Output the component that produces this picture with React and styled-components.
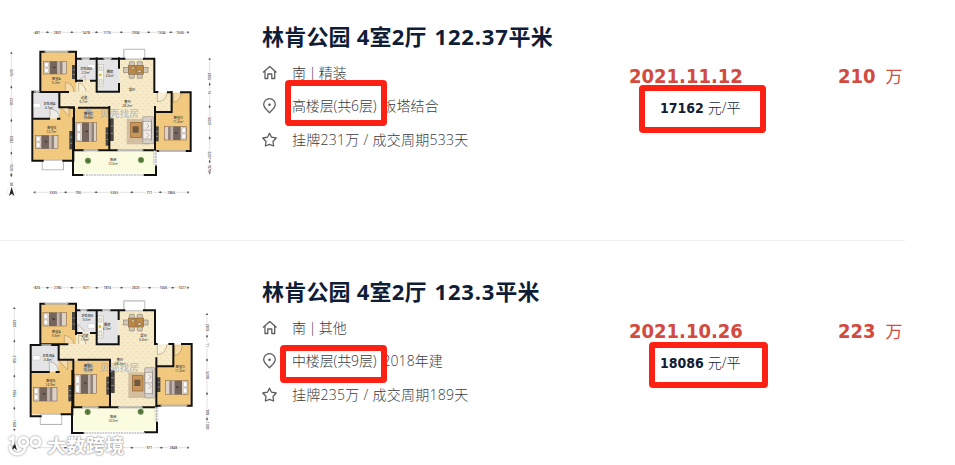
import React from "react";
import styled, { createGlobalStyle } from "styled-components";

// ----- Data -----
const plans = {
  first: {
    rooms: [
      { x: 120, y: 110, w: 108, h: 122, fill: "wood" },
      { x: 228, y: 130, w: 62, h: 65, fill: "#e4e4e6" },
      { x: 290, y: 130, w: 67, h: 101, fill: "#e4e4e6" },
      { x: 357, y: 130, w: 106, h: 150, fill: "tile" },
      { x: 228, y: 195, w: 62, h: 40, fill: "tile" },
      { x: 178, y: 232, w: 336, h: 46, fill: "tile" },
      { x: 463, y: 270, w: 52, h: 20, fill: "tile" },
      { x: 97, y: 230, w: 81, h: 80, fill: "#e4e4e6" },
      { x: 100, y: 310, w: 119, h: 126, fill: "wood" },
      { x: 178, y: 278, w: 42, h: 34, fill: "wood" },
      { x: 222, y: 278, w: 106, h: 128, fill: "wood" },
      { x: 328, y: 278, w: 136, h: 128, fill: "tile" },
      { x: 465, y: 290, w: 104, h: 118, fill: "wood" },
      { x: 515, y: 233, w: 55, h: 60, fill: "wood" },
      { x: 220, y: 406, w: 246, h: 68, fill: "#fbfbe0" },
    ],
    walls:
      "M134 110H121V231H204M205 110H228V199M228 131H244M270 131H310M335 131H373M432 131H463V231H472M504 232H515M543 232H572V408H558M476 408H465V276M515 231V291H466M97 437V230H105M119 230H121M178 233V277H222M208 278H222M97 311H147M174 311H178M97 437H128M190 437H220V310M222 278V406H250M295 406H328V276M237 278H328M328 406H352M430 406H464M290 130V230H357V207M290 197H273M228 197H246M357 130V158M290 230H314M219 406V480H248M468 452V480H432",
    bays: [
      { x: 373, y: 104, w: 60, h: 27 },
      { x: 128, y: 437, w: 61, h: 26 },
    ],
    windows: "M134 110H205M244 130H270M310 130H335M102 230H119M250 406H295M352 406H430M476 408H558",
    rails: "M250 480H432M468 407V452M463 407V450",
    doors: "M196 231V202Q220 205 222 231M233 198L255 182V198M150 310V281Q177 285 180 310M182 277L207 304V280M472 231V260Q498 260 502 230M520 235V262Q541 258 543 235M236 229V204Q254 208 258 229",
    beds: [
      [131, 139, 69, 38],
      [106, 361, 68, 40],
      [228, 323, 62, 57],
      [493, 335, 67, 40, true],
    ],
    cabinets: [[216, 150, 11, 42], [208, 348, 12, 55], [317, 337, 10, 55], [330, 310, 11, 68], [466, 334, 10, 45]],
    dining: [408, 164],
    sofa: [428, 305, 34, 81],
    rug: [380, 312, 67, 76],
    plants: [[264, 437], [423, 435]],
    counter: [294, 148, 17, 67],
    baths: [[263, 148, 22, 13], [97, 265, 24, 13]],
    labels: [
      [169, 195, "卧室A", "9.2m²"], [258, 164, "卫生间B", "2.9m²"], [330, 175, "厨房", "4.6m²"],
      [396, 229, "餐厅", ""], [252, 251, "过道", "6.7m²"], [148, 270, "卫生间A", "4.5m²"],
      [383, 263, "客厅", "28.2m²"], [155, 341, "卧室B", "12.7m²"], [266, 300, "卧室C", "10.6m²"],
      [535, 311, "卧室D", "11.4m²"], [340, 439, "阳台", "12.6m²"],
    ],
    mark: [280, 306],
    topY: 52,
    top: [[112, "481"], [173, "2831"], [258, "1478"], [321, "1776"], [407, "2904"], [485, "1504"], [540, "1506"]],
    bottomY: 532,
    bottom: [[160, "3335"], [234, "790"], [343, "5355"], [448, "711"], [514, "2866"]],
    leftX: 34,
    left: [[173, "3476"], [260, "2246"], [373, "3582"], [456, "1020"], [507, "38"]],
    rightX: 629,
    right: [[184, "2826"], [232, "16"], [318, "5020"], [420, "2207"], [459, "1878"]],
    compass: [35, 530],
  },
  second: {
    rooms: [
      { x: 120, y: 86, w: 108, h: 122, fill: "wood" },
      { x: 228, y: 106, w: 62, h: 67, fill: "#e4e4e6" },
      { x: 290, y: 106, w: 66, h: 102, fill: "#e4e4e6" },
      { x: 356, y: 106, w: 108, h: 150, fill: "tile" },
      { x: 228, y: 173, w: 62, h: 40, fill: "tile" },
      { x: 175, y: 208, w: 344, h: 48, fill: "tile" },
      { x: 467, y: 250, w: 53, h: 24, fill: "tile" },
      { x: 92, y: 210, w: 83, h: 82, fill: "#e4e4e6" },
      { x: 94, y: 290, w: 123, h: 128, fill: "wood" },
      { x: 175, y: 256, w: 43, h: 38, fill: "wood" },
      { x: 220, y: 256, w: 110, h: 140, fill: "wood" },
      { x: 330, y: 256, w: 138, h: 140, fill: "tile" },
      { x: 469, y: 274, w: 105, h: 118, fill: "wood" },
      { x: 520, y: 209, w: 54, h: 67, fill: "wood" },
      { x: 217, y: 397, w: 254, h: 70, fill: "#fbfbe0" },
    ],
    walls:
      "M134 86H121V208H202M205 86H228V177M228 106H240M262 106H306M332 106H373M432 106H465V207H470M508 207H520M546 207H575V392H562M482 392H469V250M520 207V274H469M92 424V210H124M154 210H176V254H220M92 291H146M170 291H176M92 424H122M185 418H217V288M220 254V397H246M296 397H330V254M236 254H330M330 397H354M428 397H470M290 106V208H356V184M290 174H273M228 174H244M356 106V132M290 208H314M216 397V474H251M471 440V472H435",
    bays: [
      { x: 373, y: 79, w: 60, h: 27 },
      { x: 122, y: 419, w: 62, h: 28 },
    ],
    windows: "M134 86H205M240 105H262M306 105H332M124 210H154M246 397H296M354 397H428M482 392H562",
    rails: "M251 474H435M472 397V440M467 397V440",
    doors: "M193 208V181Q218 185 222 208M233 175V148L256 170M148 290V260Q173 263 175 288M178 258L203 285V258M472 207V239Q498 237 501 208M524 212V242Q546 236 546 212M236 208V180Q253 183 258 208",
    beds: [
      [129, 113, 70, 40],
      [100, 337, 71, 41],
      [224, 299, 65, 57],
      [496, 317, 68, 41, true],
    ],
    cabinets: [[216, 111, 11, 54], [205, 330, 12, 49], [319, 305, 10, 54], [332, 286, 12, 68], [470, 307, 11, 44]],
    dining: [408, 142],
    sofa: [434, 278, 31, 91],
    rug: [385, 292, 63, 77],
    plants: [[263, 411], [422, 410]],
    counter: [293, 123, 17, 66],
    baths: [[264, 146, 21, 14], [98, 242, 22, 13]],
    labels: [
      [169, 173, "卧室A", "9.6m²"], [261, 127, "卫生间B", "3.0m²"], [322, 154, "厨房", "4.5m²"],
      [431, 185, "餐厅", "6.6m²"], [255, 186, "过道", "1.5m²"], [145, 247, "卫生间A", "4.8m²"],
      [360, 259, "客厅", "28.2m²"], [152, 322, "卧室B", "14.3m²"], [265, 277, "卧室C", "10.6m²"],
      [541, 280, "卧室D", "11.4m²"], [340, 430, "阳台", "14.0m²"],
    ],
    mark: [280, 288],
    topY: 38,
    top: [[112, "826"], [173, "2780"], [258, "1671"], [322, "1816"], [407, "2823"], [490, "1606"], [546, "1327"]],
    bottomY: 518,
    bottom: [[158, ""], [234, ""], [343, ""], [448, "971"], [520, "2848"]],
    leftX: 43,
    left: [[145, "3200"], [252, "2168"], [355, "3556"], [445, "1368"]],
    rightX: 621,
    right: [[158, "2874"], [210, "11"], [300, "5208"], [412, "908"], [452, "1000"]],
    compass: [43, 513],
  },
};

const deals = [
  {
    name: "林肯公园 4室2厅",
    area: "122.37",
    house: "南 | 精装",
    floor: "高楼层(共6层)",
    building: "板塔结合",
    cycle: "挂牌231万 / 成交周期533天",
    date: "2021.11.12",
    unitPrice: "17162",
    total: "210",
    plan: plans.first,
    planTop: 15,
    floorBox: { left: 285, top: 80, width: 102, height: 46 },
    priceBox: { left: 639, top: 85, width: 127, height: 48 },
  },
  {
    name: "林肯公园 4室2厅",
    area: "123.3",
    house: "南 | 其他",
    floor: "中楼层(共9层)",
    building: "2018年建",
    cycle: "挂牌235万 / 成交周期189天",
    date: "2021.10.26",
    unitPrice: "18086",
    total: "223",
    plan: plans.second,
    planTop: 20,
    floorBox: { left: 280, top: 90, width: 107, height: 38 },
    priceBox: { left: 649, top: 87, width: 119, height: 46 },
  },
];

// ----- Styled Components -----
const GlobalStyle = createGlobalStyle`
  body {
    margin: 0;
    background: #fff;
  }
`;

const Page = styled.main`
  position: relative;
  width: 955px;
  height: 465px;
  overflow: hidden;
  background: #fff;
  font-family: "Open Sans", "Noto Sans CJK SC", sans-serif;
`;

const Deal = styled.article`
  position: relative;
  display: flex;
  width: 905px;
  height: 240px;
  margin-bottom: 14px;
  border-bottom: 1px solid #f0f0f0;
`;

const PlanSvg = styled.svg`
  flex: none;
  width: 225px;
  height: 190px;
  margin-top: ${(p) => p.$top}px;
`;

const Info = styled.div`
  flex: none;
  box-sizing: border-box;
  width: 404px;
  padding: 20px 0 0 37px;
`;

const Title = styled.h2`
  margin: 0 0 11px;
  font-size: 22px;
  line-height: 32px;
  font-weight: 700;
  color: #101d37;
  white-space: nowrap;
  letter-spacing: 0.2px;
`;

const Area = styled.span`
  margin-left: 2px;
  letter-spacing: 0.8px;
`;

const Detail = styled.div`
  display: flex;
  align-items: center;
  height: 20px;
  margin-bottom: ${(p) => p.$gap || 13}px;
  font-size: 14px;
  line-height: 20px;
  font-weight: 300;
  letter-spacing: ${(p) => p.$spacing || 0}px;
  word-spacing: ${(p) => p.$wordSpacing || 0}px;
  color: #383b40;
  white-space: nowrap;
`;

const Icon = styled.svg`
  width: 16px;
  height: 16px;
  margin-right: 14px;
  fill: none;
  stroke: #5b5e61;
  stroke-width: 1.3;
  stroke-linejoin: round;
`;

const Building = styled.span`
  margin-left: 6px;
  letter-spacing: 0.1px;
`;

const Sold = styled.div`
  flex: none;
  width: 209px;
  padding-top: 63px;
`;

const SoldDate = styled.div`
  font-family: "DejaVu Sans Condensed", "DejaVu Sans", sans-serif;
  font-stretch: condensed;
  font-size: 20px;
  line-height: 26px;
  font-weight: 700;
  color: #d24a40;
`;

const UnitPrice = styled.div`
  display: flex;
  gap: 4px;
  padding: 8px 0 0 31px;
  font-size: 14px;
  line-height: 22px;
  font-weight: 300;
  color: #101d37;
`;

const UnitValue = styled.b`
  font-family: "DejaVu Sans Condensed", "DejaVu Sans", sans-serif;
  font-stretch: condensed;
  font-weight: 700;
`;

const Total = styled.div`
  display: flex;
  align-items: baseline;
  gap: 10px;
  height: 26px;
  padding-top: 63px;
  color: #d24a40;
  line-height: 26px;
`;

const TotalUnit = styled.span`
  font-size: 17px;
`;

const Highlight = styled.div`
  position: absolute;
  box-sizing: border-box;
  left: ${(p) => p.$box.left}px;
  top: ${(p) => p.$box.top}px;
  width: ${(p) => p.$box.width}px;
  height: ${(p) => p.$box.height}px;
  border: 6px solid #fd2114;
  border-radius: 4px;
`;

const Watermark = styled.div`
  position: absolute;
  left: 7px;
  top: 433px;
  display: flex;
  align-items: center;
  gap: 4px;
  color: #fff;
  font-size: 19px;
  line-height: 26px;
  font-weight: 700;
  letter-spacing: 0.4px;
  text-shadow: 0 0 2px #999, 0 0 2px #aaa, 0 0 1px #aaa;
`;

const WatermarkLogo = styled.svg`
  width: 36px;
  height: 26px;
  fill: none;
  stroke-linecap: round;
  filter: drop-shadow(0 0 1px #888);
`;

// ----- Floor plan -----
function Bed({ box }) {
  const [x, y, w, h, flip] = box;
  return (
    <g transform={flip ? `translate(${2 * x + w} 0) scale(-1 1)` : undefined}>
      <rect x={x} y={y} width={w} height={h} fill="#ddd2c6" stroke="#75553f" strokeWidth="1.5" />
      <rect x={x + 3} y={y + 4} width="11" height={h / 2 - 6} rx="3" fill="#fff" stroke="#918378" />
      <rect x={x + 3} y={y + h / 2 + 2} width="11" height={h / 2 - 6} rx="3" fill="#fff" stroke="#918378" />
      <rect x={x + 18} y={y} width={w * 0.34} height={h} fill="#75655d" />
      <rect x={x + 18 + w * 0.34} y={y} width="7" height={h} fill="#c1b5ad" />
      <rect x={x + 25 + w * 0.34} y={y} width="8" height={h} fill="#92847c" />
      <path d={`M${x + 28} ${y + h * 0.4}h8v6h-8z`} fill="#4f4641" />
    </g>
  );
}

function Dining({ at: [x, y] }) {
  return (
    <g stroke="#736451" strokeWidth="1.5">
      {[-12, 12].map((dx) => (
        <g key={dx} fill="#d0c8bb">
          <rect x={x + dx - 8} y={y - 24} width="15" height="15" rx="2" />
          <rect x={x + dx - 8} y={y + 11} width="15" height="15" rx="2" />
        </g>
      ))}
      <rect x={x - 37} y={y - 7} width="15" height="15" fill="#d0c8bb" />
      <rect x={x + 21} y={y - 7} width="15" height="15" fill="#d0c8bb" />
      <rect x={x - 23} y={y - 13} width="46" height="27" fill="#bd8744" />
      <path d={`M${x} ${y - 13}v27M${x - 14} ${y - 7}h9v5h-9zM${x + 6} ${y + 2}h9v6h-9z`} fill="#f4e2c0" />
    </g>
  );
}

function Sofa({ box: [x, y, w, h] }) {
  return (
    <g stroke="#857b72" strokeWidth="1.5">
      <rect x={x} y={y} width={w} height={h} rx="3" fill="#d7d0c9" />
      <rect x={x + 1} y={y + 14} width={w - 9} height={h - 28} fill="#f0ece7" />
      <path d={`M${x + 1} ${y + h / 2}h${w - 9}M${x + w - 8} ${y + 7}v${h - 14}`} fill="none" />
      <path d={`M${x + 12} ${y + 20}l7 8l-8 8M${x + 12} ${y + 48}l7 8l-8 8`} fill="none" />
    </g>
  );
}

// one dimension line: a hairline from start to end, broken where the numbers stand
function Dimensions({ items, from, to, fixed, vertical }) {
  return (
    <g transform={vertical ? `translate(${fixed} 0) rotate(90)` : `translate(0 ${fixed})`}>
      <path d={`M${from} 0H${to}`} stroke="#c4c4c4" strokeWidth="1.5" />
      <path d={`M${from} 0l6 -4v8zM${to} 0l-6 -4v8z`} fill="#555" />
      {items.map(([pos, text], i) => (
        <g key={i}>
          {i > 0 && (
            <path d={`M${(items[i - 1][0] + pos) / 2 - 5} 0l5 -3v6zm10 0l-5 -3v6z`} fill="#555" />
          )}
          <rect x={pos - text.length * 2.7 - 2} y="-5" width={text.length * 5.4 + 4} height="10" fill="#fff" />
          {text && (
            <text x={pos} y="3.5" fontSize="10" fontWeight="600" fill="#444" textAnchor="middle">
              {text}
            </text>
          )}
        </g>
      ))}
    </g>
  );
}

function FloorPlan({ plan, top }) {
  const { counter, rug, mark, compass } = plan;
  return (
    <PlanSvg $top={top} viewBox="0 0 675 570">
      <defs>
        <pattern id="wood" width="34" height="12" patternUnits="userSpaceOnUse">
          <rect width="34" height="12" fill="#f3cb80" />
          <path d="M0 1H34M17 1V7M0 7H34M5 7V13" stroke="#e8b968" strokeWidth="0.8" />
        </pattern>
        <pattern id="tile" width="18" height="18" patternUnits="userSpaceOnUse">
          <rect width="18" height="18" fill="#f6eac8" />
          <path d="M3 4h5v3h-5zM12 12h4v4h-4z" fill="#eddba9" />
        </pattern>
      </defs>

      {plan.rooms.map((r, i) => (
        <rect
          key={i}
          x={r.x}
          y={r.y}
          width={r.w}
          height={r.h}
          fill={r.fill[0] === "#" ? r.fill : `url(#${r.fill})`}
        />
      ))}
      {plan.bays.map((b, i) => (
        <g key={i} fill="#fff">
          <rect x={b.x} y={b.y} width={b.w} height={b.h} stroke="#999" strokeWidth="5" />
          <rect x={b.x} y={b.y} width={b.w} height={b.h} stroke="#ddd" strokeWidth="1.5" />
        </g>
      ))}

      <rect x={rug[0]} y={rug[1]} width={rug[2]} height={rug[3]} fill="#d3bf9f" />
      <rect x={rug[0] + 12} y={rug[1] + 10} width="32" height="46" fill="#c8965a" stroke="#94642e" strokeWidth="2" />
      <rect x={rug[0] + 18} y={rug[1] + 22} width="18" height="19" fill="#6f5941" />
      <Sofa box={plan.sofa} />
      <Dining at={plan.dining} />
      {plan.beds.map((b, i) => (
        <Bed key={i} box={b} />
      ))}
      {plan.cabinets.map(([x, y, w, h], i) => (
        <g key={i}>
          <rect x={x} y={y} width={w} height={h} fill="#47443f" />
          <path d={`M${x + 2} ${y + h / 3}h${w - 4}M${x + 2} ${y + (h * 2) / 3}h${w - 4}`} stroke="#aaa" strokeWidth="2" />
        </g>
      ))}
      <rect x={counter[0]} y={counter[1]} width={counter[2]} height={counter[3]} fill="#f8f5e9" stroke="#8c8c82" />
      <path
        d={`M${counter[0] + 4} ${counter[1] + 8}h8v10h-8zM${counter[0] + 4} ${counter[1] + 46}h8v14h-8z`}
        fill="none"
        stroke="#777"
      />
      <circle cx={counter[0] + 7} cy={counter[1] + 32} r="4" fill="#d4bb39" />
      {plan.baths.map(([x, y, w, h], i) => (
        <rect key={i} x={x} y={y} width={w} height={h} rx="3" fill="#fff" stroke="#aaa" />
      ))}
      {plan.plants.map(([x, y], i) => (
        <g key={i}>
          <circle cx={x} cy={y} r="9" fill="#688a49" />
          <path d={`M${x - 7} ${y}h14M${x} ${y - 7}v14M${x - 5} ${y - 5}l10 10`} stroke="#3e672e" strokeWidth="2" />
        </g>
      ))}

      <path d={plan.doors} fill="#ffffff55" stroke="#9d8257" strokeWidth="1.5" />
      <path d={plan.walls} fill="none" stroke="#111" strokeWidth="6" strokeLinecap="square" />
      <path d={plan.windows} fill="none" stroke="#999" strokeWidth="5" />
      <path d={plan.windows} fill="none" stroke="#ddd" strokeWidth="1.5" />
      <path d={plan.rails} fill="none" stroke="#999" strokeWidth="5" strokeDasharray="6 2" />
      <path d={plan.rails} fill="none" stroke="#fff" strokeWidth="2.5" />

      <g fill="#8ca6cb" opacity="0.65">
        <path
          d={`M${mark[0] - 33} ${mark[1] - 12}l18 -14l18 14h-6v16h-24v-16zM${mark[0] - 20} ${mark[1] - 9}v8h10v-8z`}
          fillRule="evenodd"
        />
        <text x={mark[0] + 19} y={mark[1] + 1} fontSize="29" fontWeight="500" letterSpacing="1">
          贝壳找房
        </text>
      </g>
      {plan.labels.map(([x, y, name, area]) => (
        <g key={name} fontSize="10" fill="#252525" fontWeight="500" textAnchor="middle">
          <text x={x} y={y}>{name}</text>
          {area && <text x={x} y={y + 12}>{area}</text>}
        </g>
      ))}

      <Dimensions items={plan.top} from={100} to={568} fixed={plan.topY} />
      <Dimensions items={plan.bottom} from={100} to={568} fixed={plan.bottomY} />
      <Dimensions items={plan.left} from={plan.topY + 58} to={plan.topY + 430} fixed={plan.leftX} vertical />
      <Dimensions items={plan.right} from={plan.topY + 76} to={plan.topY + 426} fixed={plan.rightX} vertical />
      <g transform={`translate(${compass[0]} ${compass[1]})`}>
        <circle r="13" fill="#fff" stroke="#ccc" />
        <path d="M0 -14l8 27l-8 -7l-8 7z" fill="#222" />
      </g>
    </PlanSvg>
  );
}

// ----- Icons -----
const HouseIcon = () => (
  <Icon viewBox="0 0 16 16">
    <path d="M1 7.4L7.8 1.4L14.5 7.4M3 6V13.5H5.8V9H9.8V13.5H12.7V6" />
  </Icon>
);

const PinIcon = () => (
  <Icon viewBox="0 0 16 16">
    <path d="M7.5 14.7C5.3 12.5 1.7 9.8 1.7 6.5A5.8 5.8 0 0 1 13.3 6.5C13.3 9.8 9.7 12.5 7.5 14.7Z" />
    <circle cx="7.5" cy="6.8" r="1.3" fill="#5b5e61" stroke="none" />
  </Icon>
);

const StarIcon = () => (
  <Icon viewBox="0 0 16 16">
    <path d="M7.5 1.3L9.5 5.2L14.2 6L11 9.5L11.6 14L7.5 12.3L3.4 14L4 9.5L.8 6L5.5 5.2Z" />
  </Icon>
);

// ----- Component -----
export default function App() {
  return (
    <Page>
      <GlobalStyle />
      {deals.map((deal) => (
        <Deal key={deal.date}>
          <FloorPlan plan={deal.plan} top={deal.planTop} />
          <Info>
            <Title>
              {deal.name} <Area>{deal.area}</Area>平米
            </Title>
            <Detail $wordSpacing={-1}>
              <HouseIcon />
              {deal.house}
            </Detail>
            <Detail $gap={14} $spacing={-0.15}>
              <PinIcon />
              {deal.floor}
              <Building>{deal.building}</Building>
            </Detail>
            <Detail $spacing={0.27}>
              <StarIcon />
              {deal.cycle}
            </Detail>
          </Info>
          <Sold>
            <SoldDate>{deal.date}</SoldDate>
            <UnitPrice>
              <UnitValue>{deal.unitPrice}</UnitValue>
              元/平
            </UnitPrice>
          </Sold>
          <Total>
            <SoldDate as="span">{deal.total}</SoldDate>
            <TotalUnit>万</TotalUnit>
          </Total>
          <Highlight $box={deal.floorBox} />
          <Highlight $box={deal.priceBox} />
        </Deal>
      ))}
      <Watermark>
        <WatermarkLogo viewBox="0 0 36 26">
          <path
            d="M3 6L6 4V11M3 14Q4 22 12 21Q17 20 18 15M21 9A4.5 4.5 0 1 0 12 9A4.5 4.5 0 1 0 21 9M33 9A4.5 4.5 0 1 0 24 9A4.5 4.5 0 1 0 33 9"
            stroke="#fff"
            strokeWidth="2.8"
          />
        </WatermarkLogo>
        大数跨境
      </Watermark>
    </Page>
  );
}
